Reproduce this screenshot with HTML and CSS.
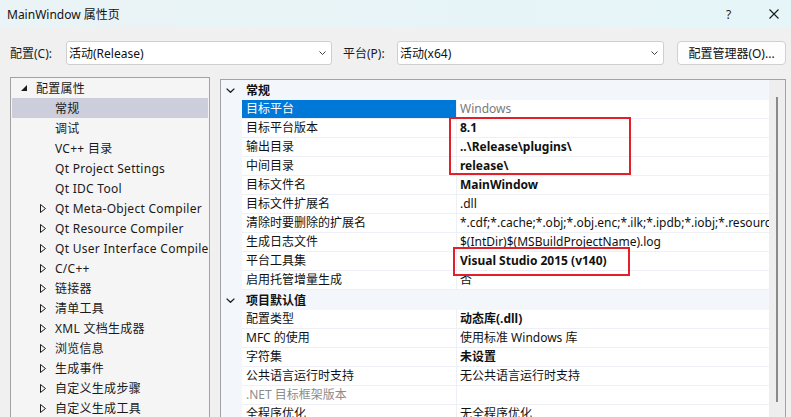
FILE: index.html
```html
<!DOCTYPE html>
<html lang="zh-CN">
<head>
<meta charset="utf-8">
<title>MainWindow 属性页</title>
<link rel="stylesheet" href="styles.css">
</head>
<body>
<div class="titlebar">
  <span class="title">MainWindow 属性页</span>
  <span class="help">?</span>
  <svg class="close" width="10" height="10" viewBox="0 0 10 10"><path d="M0.5 0.5 L9.5 9.5 M9.5 0.5 L0.5 9.5" stroke="#1a1a1a" stroke-width="1.1" fill="none"/></svg>
</div>

<div class="toolbar">
  <span class="lbl lbl-config">配置(C):</span>
  <div class="combo combo-config">
    <span class="combo-text">活动(Release)</span>
    <svg class="chev" width="7" height="4" viewBox="0 0 7 4"><path d="M0.5 0.5 L3.5 3.5 L6.5 0.5" stroke="#444" stroke-width="1" fill="none"/></svg>
  </div>
  <span class="lbl lbl-platform">平台(P):</span>
  <div class="combo combo-platform">
    <span class="combo-text">活动(x64)</span>
    <svg class="chev" width="7" height="4" viewBox="0 0 7 4"><path d="M0.5 0.5 L3.5 3.5 L6.5 0.5" stroke="#444" stroke-width="1" fill="none"/></svg>
  </div>
  <button class="btn">配置管理器(O)...</button>
</div>

<div class="main">
  <div class="tree">
    <div class="ti root"><span class="exp"><svg width="6" height="6" viewBox="0 0 6 6"><path d="M6 0 L6 6 L0 6 Z" fill="#1a1a1a"/></svg></span><span class="tl">配置属性</span></div>
    <div class="ti child sel"><span class="exp"></span><span class="tl">常规</span></div>
    <div class="ti child"><span class="exp"></span><span class="tl">调试</span></div>
    <div class="ti child"><span class="exp"></span><span class="tl">VC++ 目录</span></div>
    <div class="ti child"><span class="exp"></span><span class="tl">Qt Project Settings</span></div>
    <div class="ti child"><span class="exp"></span><span class="tl">Qt IDC Tool</span></div>
    <div class="ti child"><span class="exp"><svg width="6" height="9" viewBox="0 0 6 9"><path d="M0.5 0.5 L5.5 4.5 L0.5 8.5 Z" fill="none" stroke="#1a1a1a" stroke-width="1"/></svg></span><span class="tl">Qt Meta-Object Compiler</span></div>
    <div class="ti child"><span class="exp"><svg width="6" height="9" viewBox="0 0 6 9"><path d="M0.5 0.5 L5.5 4.5 L0.5 8.5 Z" fill="none" stroke="#1a1a1a" stroke-width="1"/></svg></span><span class="tl">Qt Resource Compiler</span></div>
    <div class="ti child"><span class="exp"><svg width="6" height="9" viewBox="0 0 6 9"><path d="M0.5 0.5 L5.5 4.5 L0.5 8.5 Z" fill="none" stroke="#1a1a1a" stroke-width="1"/></svg></span><span class="tl">Qt User Interface Compiler</span></div>
    <div class="ti child"><span class="exp"><svg width="6" height="9" viewBox="0 0 6 9"><path d="M0.5 0.5 L5.5 4.5 L0.5 8.5 Z" fill="none" stroke="#1a1a1a" stroke-width="1"/></svg></span><span class="tl">C/C++</span></div>
    <div class="ti child"><span class="exp"><svg width="6" height="9" viewBox="0 0 6 9"><path d="M0.5 0.5 L5.5 4.5 L0.5 8.5 Z" fill="none" stroke="#1a1a1a" stroke-width="1"/></svg></span><span class="tl">链接器</span></div>
    <div class="ti child"><span class="exp"><svg width="6" height="9" viewBox="0 0 6 9"><path d="M0.5 0.5 L5.5 4.5 L0.5 8.5 Z" fill="none" stroke="#1a1a1a" stroke-width="1"/></svg></span><span class="tl">清单工具</span></div>
    <div class="ti child"><span class="exp"><svg width="6" height="9" viewBox="0 0 6 9"><path d="M0.5 0.5 L5.5 4.5 L0.5 8.5 Z" fill="none" stroke="#1a1a1a" stroke-width="1"/></svg></span><span class="tl">XML 文档生成器</span></div>
    <div class="ti child"><span class="exp"><svg width="6" height="9" viewBox="0 0 6 9"><path d="M0.5 0.5 L5.5 4.5 L0.5 8.5 Z" fill="none" stroke="#1a1a1a" stroke-width="1"/></svg></span><span class="tl">浏览信息</span></div>
    <div class="ti child"><span class="exp"><svg width="6" height="9" viewBox="0 0 6 9"><path d="M0.5 0.5 L5.5 4.5 L0.5 8.5 Z" fill="none" stroke="#1a1a1a" stroke-width="1"/></svg></span><span class="tl">生成事件</span></div>
    <div class="ti child"><span class="exp"><svg width="6" height="9" viewBox="0 0 6 9"><path d="M0.5 0.5 L5.5 4.5 L0.5 8.5 Z" fill="none" stroke="#1a1a1a" stroke-width="1"/></svg></span><span class="tl">自定义生成步骤</span></div>
    <div class="ti child"><span class="exp"><svg width="6" height="9" viewBox="0 0 6 9"><path d="M0.5 0.5 L5.5 4.5 L0.5 8.5 Z" fill="none" stroke="#1a1a1a" stroke-width="1"/></svg></span><span class="tl">自定义生成工具</span></div>
  </div>

  <div class="pg">
    <div class="pg-content">
      <div class="cat"><span class="cat-gut"><svg width="9" height="5" viewBox="0 0 9 5"><path d="M0.6 0.6 L4.5 4.3 L8.4 0.6" stroke="#1a1a1a" stroke-width="1.3" fill="none"/></svg></span><span class="cat-name">常规</span></div>
      <div class="row"><span class="gut"></span><span class="name selname">目标平台</span><span class="val dim">Windows</span></div>
      <div class="row"><span class="gut"></span><span class="name">目标平台版本</span><span class="val b">8.1</span></div>
      <div class="row"><span class="gut"></span><span class="name">输出目录</span><span class="val b">..\Release\plugins\</span></div>
      <div class="row"><span class="gut"></span><span class="name">中间目录</span><span class="val b">release\</span></div>
      <div class="row"><span class="gut"></span><span class="name">目标文件名</span><span class="val b">MainWindow</span></div>
      <div class="row"><span class="gut"></span><span class="name">目标文件扩展名</span><span class="val">.dll</span></div>
      <div class="row"><span class="gut"></span><span class="name">清除时要删除的扩展名</span><span class="val">*.cdf;*.cache;*.obj;*.obj.enc;*.ilk;*.ipdb;*.iobj;*.resources;*.tlb;*.tli;*.tlh;*.tmp;*.rsp;*.pgc;*.pgd;*.meta;*.tlog</span></div>
      <div class="row"><span class="gut"></span><span class="name">生成日志文件</span><span class="val">$(IntDir)$(MSBuildProjectName).log</span></div>
      <div class="row"><span class="gut"></span><span class="name">平台工具集</span><span class="val b">Visual Studio 2015 (v140)</span></div>
      <div class="row"><span class="gut"></span><span class="name">启用托管增量生成</span><span class="val">否</span></div>
      <div class="cat"><span class="cat-gut"><svg width="9" height="5" viewBox="0 0 9 5"><path d="M0.6 0.6 L4.5 4.3 L8.4 0.6" stroke="#1a1a1a" stroke-width="1.3" fill="none"/></svg></span><span class="cat-name">项目默认值</span></div>
      <div class="row"><span class="gut"></span><span class="name">配置类型</span><span class="val b">动态库(.dll)</span></div>
      <div class="row"><span class="gut"></span><span class="name">MFC 的使用</span><span class="val">使用标准 Windows 库</span></div>
      <div class="row"><span class="gut"></span><span class="name">字符集</span><span class="val b">未设置</span></div>
      <div class="row"><span class="gut"></span><span class="name">公共语言运行时支持</span><span class="val">无公共语言运行时支持</span></div>
      <div class="row"><span class="gut"></span><span class="name dimname">.NET 目标框架版本</span><span class="val"></span></div>
      <div class="row"><span class="gut"></span><span class="name">全程序优化</span><span class="val">无全程序优化</span></div>
    </div>
    <div class="scroll"><div class="thumb"></div></div>
    <div class="mark mark1"></div>
    <div class="mark mark2"></div>
  </div>
</div>
</body>
</html>
```

FILE: styles.css
```css
* { box-sizing: border-box; }
html, body { margin: 0; padding: 0; }
body {
  width: 791px;
  height: 417px;
  overflow: hidden;
  background: #f0f0f0;
  font-family: "Noto Sans", "Noto Sans CJK SC", sans-serif;
  font-size: 12px;
  color: #000;
}

/* title bar */
.titlebar {
  height: 28px;
  display: flex;
  align-items: center;
  padding-left: 7px;
  background: linear-gradient(90deg, #eaf3f6 0%, #e7f4f7 60%, #e5f5f8 100%);
}
.title { flex: 1; font-size: 12px; color: #111; }
.help { width: 7px; margin-right: 36px; font-size: 12px; color: #222; }
.close { margin-right: 12px; display: block; }

/* toolbar */
.toolbar {
  display: flex;
  align-items: center;
  height: 24px;
  margin-top: 13px;
  padding-left: 10px;
}
.lbl { color: #1a1a1a; white-space: nowrap; }
.lbl-config { width: 56px; }
.lbl-platform { width: 54px; margin-left: 11px; }
.combo {
  height: 24px;
  display: flex;
  align-items: center;
  background: #fff;
  border: 1px solid #cfcfcf;
  border-radius: 3px;
  padding: 0 5px 0 2px;
}
.combo-config { width: 266px; }
.combo-platform { width: 267px; }
.combo-text { flex: 1; white-space: nowrap; color: #111; }
.chev { display: block; }
.btn {
  margin-left: 13px;
  width: 109px;
  height: 24px;
  background: #fdfdfd;
  border: 1px solid #d0d0d0;
  border-radius: 4px;
  font-family: inherit;
  font-size: 12px;
  color: #111;
  padding: 0;
}

/* main area */
.main {
  display: flex;
  align-items: flex-start;
  margin-top: 12px;
  padding-left: 10px;
}

/* tree */
.tree {
  width: 200px;
  height: 360px;
  background: #f5f5f5;
  border: 1px solid #a3a3a3;
  border-bottom: none;
  padding: 0 1px;
  overflow: hidden;
}
.ti {
  height: 20px;
  display: flex;
  align-items: center;
  white-space: nowrap;
  color: #1a1a1a;
}
.ti .exp { width: 6px; height: 9px; display: flex; align-items: center; flex: none; }
.ti .exp svg { display: block; }
.ti .tl { margin-left: 9px; letter-spacing: 0.28px; }
.root { padding-left: 9px; }
.root .exp { height: 6px; }
.child { padding-left: 28px; }
.sel { background: #cccedb; }

/* property grid */
.pg {
  position: relative;
  display: flex;
  width: 566px;
  height: 360px;
  margin-left: 10px;
  margin-top: 2px;
  background: #fff;
  border: 1px solid #a3a3a3;
  border-bottom: none;
  overflow: hidden;
}
.pg-content { width: 548px; flex: none; }
.cat {
  height: 20px;
  display: flex;
  align-items: center;
  background: #f3f6fb;
}
.cat-gut { width: 21px; padding-left: 5px; display: flex; align-items: center; }
.cat-gut svg { display: block; }
.cat-name { padding-left: 4px; font-weight: bold; color: #111; }
.row { height: 19px; display: flex; }
.gut { width: 21px; flex: none; background: #f3f6fb; }
.name {
  width: 215px;
  flex: none;
  padding-left: 4px;
  line-height: 18px;
  border-right: 1px solid #eef0f5;
  border-bottom: 1px solid #eef0f5;
  white-space: nowrap;
  overflow: hidden;
  color: #111;
}
.selname { background: #0078d7; color: #fff; }
.dimname { color: #8c8c8c; }
.val {
  flex: 1;
  padding-left: 3px;
  line-height: 18px;
  border-bottom: 1px solid #eef0f5;
  white-space: nowrap;
  overflow: hidden;
  color: #111;
}
.val.b { font-weight: bold; }
.val.dim { color: #7a7a7a; }

.scroll {
  width: 16px;
  flex: none;
  background: #eeeeee;
  padding: 17px 0 0 7px;
}
.thumb { width: 2px; height: 305px; background: #8a8a8a; }

/* red annotation boxes */
.mark { position: absolute; border: 2px solid #e3202a; }
.mark1 { left: 228px; top: 37px; width: 182px; height: 58px; }
.mark2 { left: 232px; top: 167px; width: 177px; height: 29px; }
```
